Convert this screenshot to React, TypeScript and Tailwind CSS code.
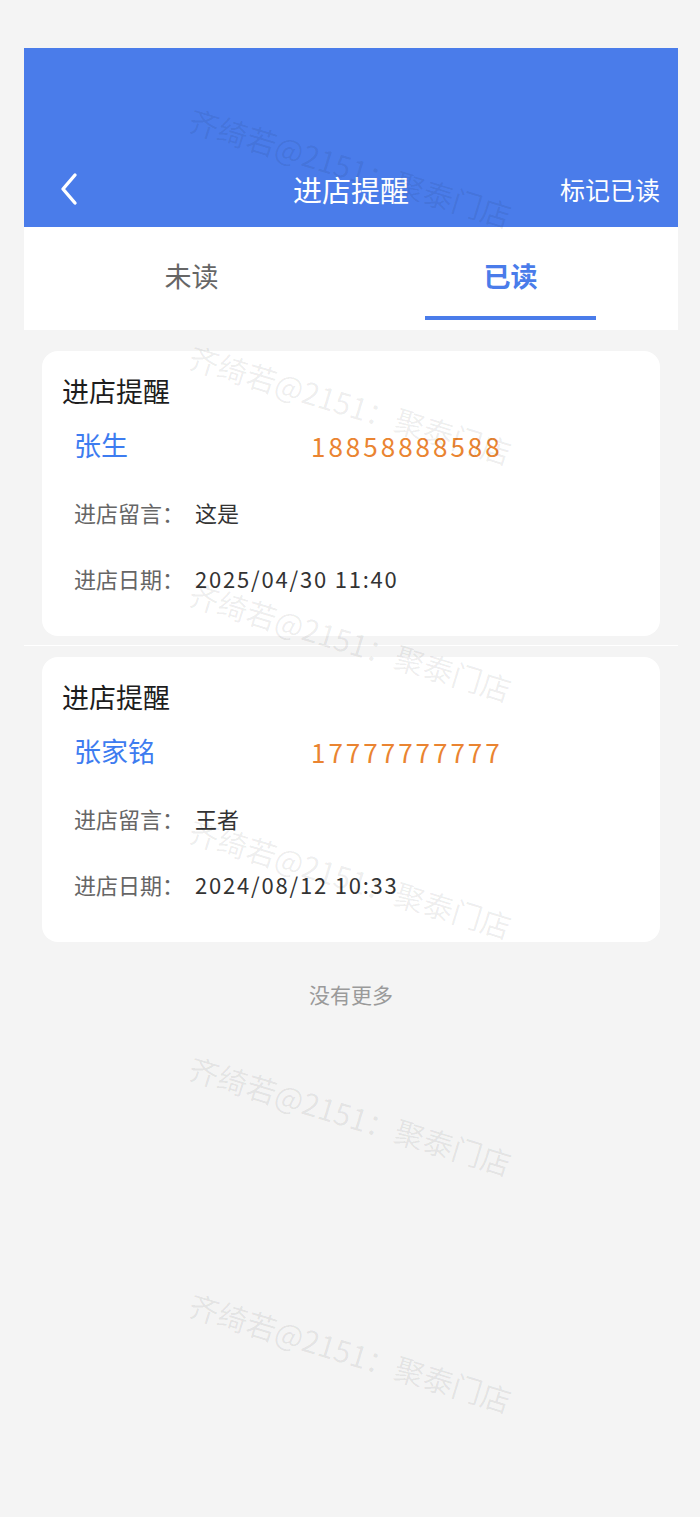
import { useState } from "react";

const FONT = { fontFamily: '"Noto Sans CJK SC", "Noto Sans", sans-serif' };

const records = [
  {
    id: 1,
    name: "张生",
    phone: "18858888588",
    message: "这是",
    date: "2025/04/30 11:40",
  },
  {
    id: 2,
    name: "张家铭",
    phone: "17777777777",
    message: "王者",
    date: "2024/08/12 10:33",
  },
];

function Watermark() {
  return (
    <div className="absolute inset-0 z-10 pointer-events-none overflow-hidden">
      <div className="flex flex-col pt-[48px]">
        {[0, 1, 2, 3, 4, 5].map((i) => (
          <div key={i} className="h-[237px] flex items-center justify-center">
            <span className="rotate-[17deg] whitespace-nowrap text-[30px] leading-none text-black/[0.07]">
              齐绮若@2151：聚泰门店
            </span>
          </div>
        ))}
      </div>
    </div>
  );
}

export default function App() {
  const [tab, setTab] = useState("read");

  return (
    <div className="relative min-h-[1517px] bg-[#f4f4f4] pt-[48px]" style={FONT}>
      <div className="w-[654px] ml-[24px]">
        {/* cabecera */}
        <div className="h-[179px] bg-[#4a7cea] flex items-end">
          <div className="h-[76px] w-full grid grid-cols-[1fr_auto_1fr] items-center text-white">
            <div className="pl-[34px]">
              <svg width="24" height="34" viewBox="0 0 24 34" fill="none">
                <path
                  d="M17 3 L5 17 L17 31"
                  stroke="white"
                  strokeWidth="3.4"
                  strokeLinecap="round"
                  strokeLinejoin="round"
                />
              </svg>
            </div>
            <div className="text-[29px] leading-[36px]">进店提醒</div>
            <div className="text-right pr-[18px] text-[25px] leading-[32px]">标记已读</div>
          </div>
        </div>

        {/* tabs */}
        <div className="h-[103px] bg-white flex px-[8px]">
          {[
            ["unread", "未读"],
            ["read", "已读"],
          ].map(([id, label]) => (
            <button
              key={id}
              onClick={() => setTab(id)}
              className="flex-1 flex flex-col items-center"
            >
              <span
                className={`mt-[35px] text-[27px] leading-[28px] ${
                  tab === id ? "text-[#4a7cea] font-bold" : "text-[#666666]"
                }`}
              >
                {label}
              </span>
              <span
                className={`mt-auto mb-[10px] w-[171px] h-[4px] ${
                  tab === id ? "bg-[#4a7cea]" : "bg-transparent"
                }`}
              ></span>
            </button>
          ))}
        </div>

        {/* lista */}
        <div>
          {records.map((item, idx) => (
            <div
              key={item.id}
              className={
                idx === 0
                  ? "pt-[21px] pb-[9px] border-b border-white"
                  : "pt-[11px]"
              }
            >
              <div className="mx-[18px] h-[285px] bg-white rounded-[16px] pt-[22px]">
                <div className="pl-[20px] text-[27px] leading-[36px] text-[#1d1d1d]">
                  进店提醒
                </div>
                <div className="mt-[18px] pl-[32px] h-[36px] flex items-center text-[27px]">
                  <span className="w-[237px] text-[#3d7cf0]">{item.name}</span>
                  <span className="text-[26px] text-[#ea8431] tracking-[3px]">{item.phone}</span>
                </div>
                <div className="mt-[31px] pl-[32px] h-[36px] flex items-center text-[22px]">
                  <span className="w-[121px] text-[#666666]">进店留言：</span>
                  <span className="text-[#333333]">{item.message}</span>
                </div>
                <div className="mt-[30px] pl-[32px] h-[36px] flex items-center text-[22px]">
                  <span className="w-[121px] text-[#666666]">进店日期：</span>
                  <span className="text-[#333333] tracking-[1.8px]">{item.date}</span>
                </div>
              </div>
            </div>
          ))}
        </div>

        <div className="mt-[38px] text-center text-[21px] leading-[28px] text-[#9a9a9a]">
          没有更多
        </div>
      </div>

      <Watermark />
    </div>
  );
}
